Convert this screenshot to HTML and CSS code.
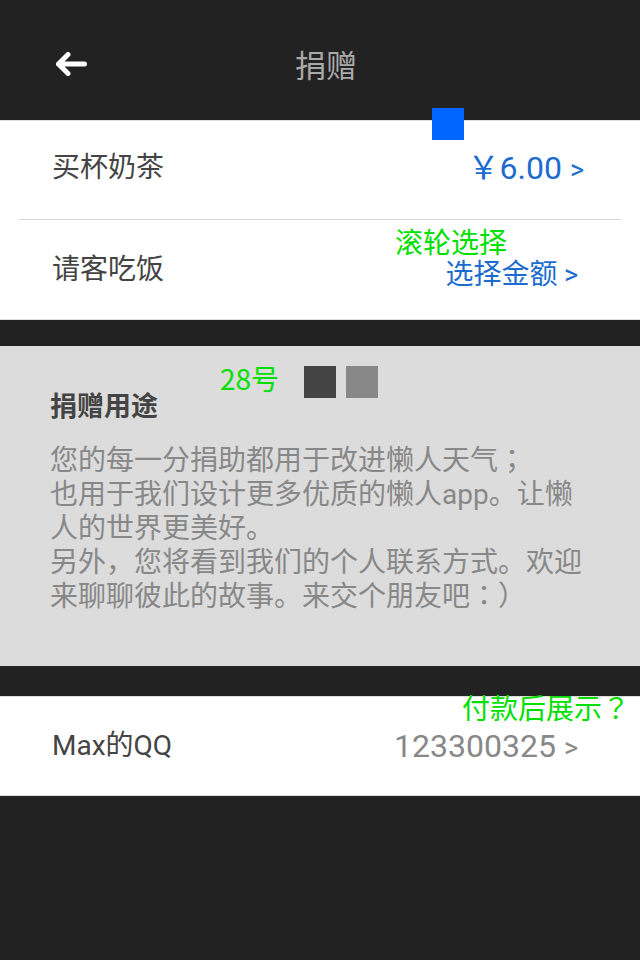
FILE: index.html
```html
<!DOCTYPE html>
<html lang="zh-CN">
<head>
<meta charset="utf-8">
<title>捐赠</title>
<link rel="stylesheet" href="styles.css">
</head>
<body>
<div class="screen">
  <header class="topbar">
    <div class="back">
      <svg width="32" height="24" viewBox="0 0 32 24" aria-hidden="true">
        <path d="M3.5 12H29.5M13 2.5L3.5 12L13 21.5" fill="none" stroke="#fff" stroke-width="5" stroke-linecap="round" stroke-linejoin="round"/>
      </svg>
    </div>
    <h1 class="title">捐赠</h1>
    <div class="spacer"></div>
  </header>

  <section class="card">
    <span class="marker-blue"></span>
    <div class="row row-tea">
      <span class="label">买杯奶茶</span>
      <span class="value price">￥6.00 <span class="chev">&gt;</span></span>
    </div>
    <div class="divider"></div>
    <div class="row row-meal">
      <span class="label">请客吃饭</span>
      <span class="value choose">选择金额 <span class="chev">&gt;</span></span>
    </div>
    <span class="note note-wheel">滚轮选择</span>
  </section>

  <section class="panel">
    <span class="note note-size">28号</span>
    <span class="swatch swatch-dark"></span>
    <span class="swatch swatch-mid"></span>
    <h2 class="panel-title">捐赠用途</h2>
    <p class="panel-text">您的每一分捐助都用于改进懒人天气<span class="punct" lang="ja">；</span><br>也用于我们设计更多优质的懒人app。让懒<br>人的世界更美好。<br>另外，您将看到我们的个人联系方式。欢迎<br>来聊聊彼此的故事。来交个朋友吧<span class="punct" lang="ja">：）</span></p>
  </section>

  <section class="card card-qq">
    <div class="row row-qq">
      <span class="label">Max的QQ</span>
      <span class="value qq">123300325 <span class="chev">&gt;</span></span>
    </div>
    <span class="note note-pay">付款后展示<span class="punct-note" lang="ja">？</span></span>
  </section>
</div>
</body>
</html>
```

FILE: styles.css
```css
html, body {
  margin: 0;
  padding: 0;
  background: #222222;
}

.screen {
  width: 640px;
  height: 960px;
  background: #222222;
  font-family: Roboto, "Noto Sans CJK SC", sans-serif;
  text-spacing-trim: space-all;
  overflow: hidden;
}

.topbar {
  height: 120px;
  display: grid;
  grid-template-columns: 1fr auto 1fr;
  align-items: center;
}

.back {
  padding-left: 55px;
  display: flex;
  align-items: center;
  margin-top: 8px;
}

.title {
  margin: 6px 0 0 12px;
  font-family: "Noto Sans CJK SC", sans-serif;
  font-weight: 400;
  font-size: 31px;
  line-height: 1;
  color: #a9a9a9;
}

.card {
  position: relative;
  background: #ffffff;
  border-top: 1px solid #dddddd;
  border-bottom: 1px solid #dddddd;
}

.row {
  height: 98px;
  display: flex;
  align-items: center;
  justify-content: space-between;
  padding: 0 57px 0 52px;
}

.row-tea {
  padding-bottom: 4px;
  height: 94px;
  padding-right: 56px;
}

.row-meal {
  height: 99px;
  padding-right: 62px;
}

.divider {
  height: 1px;
  margin: 0 19px;
  background: #d8d8d8;
}

.label {
  font-family: Roboto, "Noto Sans CJK SC", sans-serif;
  font-size: 28px;
  line-height: 1;
  color: #444444;
}

.value {
  line-height: 1;
  color: #1c6ccf;
}

.price {
  font-size: 32px;
}

.price .chev {
  font-size: 27px;
}

.choose {
  font-family: "Noto Sans CJK SC", sans-serif;
  font-size: 28px;
  margin-top: 8px;
}

.choose .chev {
  font-family: Roboto, sans-serif;
  font-size: 27px;
}

.qq {
  font-size: 32px;
  color: #888888;
}

.qq .chev {
  font-size: 27px;
}

.card-qq {
  margin-top: 30px;
}

.row-qq {
  height: 98px;
  padding-right: 62px;
}

.panel {
  position: relative;
  margin-top: 26px;
  height: 320px;
  box-sizing: border-box;
  background: #dcdcdc;
  padding: 42px 30px 0 50px;
}

.panel-title {
  margin: 0;
  font-family: "Noto Sans CJK SC", sans-serif;
  font-weight: 700;
  font-size: 27px;
  line-height: 34px;
  color: #444444;
}

.panel-text {
  margin: 22px 0 0;
  font-family: Roboto, "Noto Sans CJK SC", sans-serif;
  font-size: 28px;
  line-height: 34px;
  color: #888888;
  white-space: nowrap;
}

.punct {
  font-family: Roboto, "Noto Sans CJK JP", sans-serif;
}

.punct-note {
  font-family: "Noto Sans CJK JP", sans-serif;
}

.note {
  position: absolute;
  font-family: "Noto Sans CJK SC", sans-serif;
  font-size: 28px;
  line-height: 1;
  color: #00e000;
  white-space: nowrap;
}

.note-wheel {
  left: 395px;
  top: 106px;
}

.note-size {
  left: 220px;
  top: 18px;
}

.note-pay {
  left: 462px;
  top: -4px;
}

.marker-blue {
  position: absolute;
  left: 432px;
  top: -13px;
  width: 32px;
  height: 32px;
  background: #0066ff;
}

.swatch {
  position: absolute;
  top: 20px;
  width: 32px;
  height: 32px;
}

.swatch-dark {
  left: 304px;
  background: #444444;
}

.swatch-mid {
  left: 346px;
  background: #888888;
}
```
